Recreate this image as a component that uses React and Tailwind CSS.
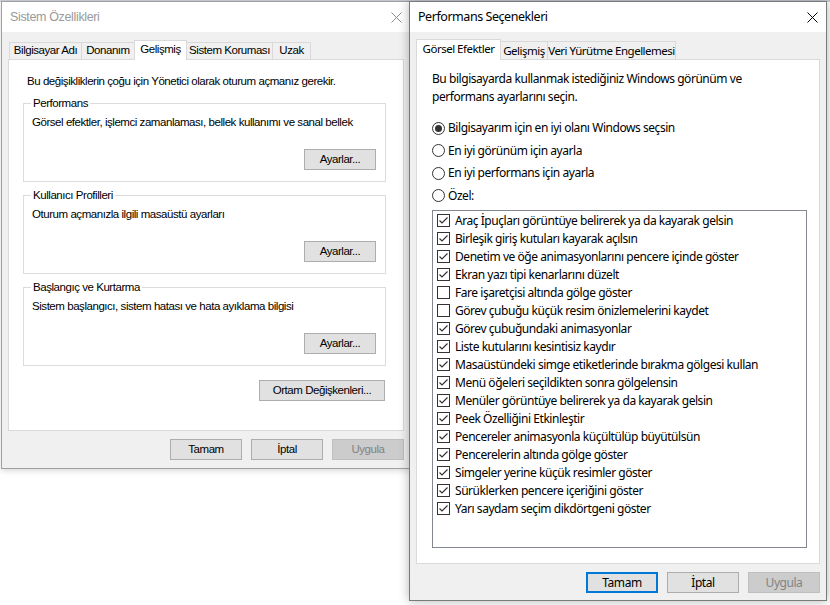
import React from 'react';

const W1_FONT = { fontFamily: '"Liberation Sans", Arial, sans-serif' };
const W2_FONT = { fontFamily: '"Noto Sans", "Open Sans", sans-serif' };

function CloseX({ color }) {
  return (
    <svg width="11" height="11" viewBox="0 0 11 11">
      <path d="M0.5 0.5 L10.5 10.5 M10.5 0.5 L0.5 10.5" stroke={color} strokeWidth="1" />
    </svg>
  );
}

function Btn({ children, w = 'w-[72px]', disabled, focused }) {
  let cls = 'border-[#adadad] bg-[#e1e1e1] text-black';
  if (disabled) cls = 'border-[#bfbfbf] bg-[#cccccc] text-[#838383]';
  if (focused) cls = 'border-2 border-[#0078d7] bg-[#e1e1e1] text-black';
  return (
    <div className={`h-[21px] ${w} flex items-center justify-center whitespace-nowrap border ${cls}`}>
      {children}
    </div>
  );
}

// group box with its caption sitting on the top border
function GroupBox({ title, text }) {
  return (
    <div className="relative border border-[#dcdcdc] h-[79px] pl-[8px] pr-[9px] pt-[11px] flex flex-col">
      <span className="absolute -top-[8px] left-[7px] bg-white px-[2px] leading-[14px]">{title}</span>
      <div className="leading-[14px]">{text}</div>
      <div className="mt-[20px] flex justify-end">
        <Btn>Ayarlar...</Btn>
      </div>
    </div>
  );
}

function SystemProps() {
  const tabs = [
    ['Bilgisayar Adı', 'w-[73px]'],
    ['Donanım', 'w-[54px]'],
    ['Gelişmiş', 'w-[53px]', true],
    ['Sistem Koruması', 'w-[87px]'],
    ['Uzak', 'w-[39px]'],
  ];
  return (
    <div
      className="absolute left-[1px] top-[1px] w-[410px] h-[468px] border border-[#a0a0a0] bg-[#f0f0f0] flex flex-col text-[11.5px] tracking-[-0.45px] shadow-[0_2px_6px_rgba(0,0,0,0.15)]"
      style={W1_FONT}
    >
      <div className="h-[30px] bg-white flex items-center justify-between pl-[8px] pr-[8px] shrink-0">
        <span className="text-[#9a9a9a] text-[12.5px] tracking-[-0.35px]">Sistem Özellikleri</span>
        <CloseX color="#8a8a8a" />
      </div>
      <div className="px-[6px] pt-[8px] flex flex-col">
        <div className="flex items-end h-[19px] pl-[1px]">
          {tabs.map(([label, w, sel]) => (
            <div
              key={label}
              className={`${w} flex items-center justify-center whitespace-nowrap border-[#d9d9d9] border-t border-l border-r -mr-px ${
                sel ? 'h-[20px] bg-white relative z-10 -mb-px pb-[2px]' : 'h-[17px] bg-[#f0f0f0]'
              }`}
            >
              {label}
            </div>
          ))}
        </div>
        <div className="h-[372px] border border-[#d9d9d9] bg-white flex flex-col pl-[14px] pr-[17px] pt-[13px]">
          <div className="pl-[4px] leading-[16px]">Bu değişikliklerin çoğu için Yönetici olarak oturum açmanız gerekir.</div>
          <div className="mt-[14px] flex flex-col gap-[13px]">
            <GroupBox title="Performans" text="Görsel efektler, işlemci zamanlaması, bellek kullanımı ve sanal bellek" />
            <GroupBox title="Kullanıcı Profilleri" text="Oturum açmanızla ilgili masaüstü ayarları" />
            <GroupBox title="Başlangıç ve Kurtarma" text="Sistem başlangıcı, sistem hatası ve hata ayıklama bilgisi" />
          </div>
          <div className="mt-[14px] flex justify-end pr-[1px]">
            <Btn w="w-[126px]">Ortam Değişkenleri...</Btn>
          </div>
        </div>
        <div className="mt-[8px] flex justify-end gap-[9px]">
          <Btn>Tamam</Btn>
          <Btn>İptal</Btn>
          <Btn disabled>Uygula</Btn>
        </div>
      </div>
    </div>
  );
}

function Radio({ checked, label }) {
  return (
    <div className="flex items-center gap-[3px] h-[16px]">
      <div className="w-[13px] h-[13px] rounded-full border border-[#333] bg-white flex items-center justify-center">
        {checked && <div className="w-[7px] h-[7px] rounded-full bg-[#333]" />}
      </div>
      <span>{label}</span>
    </div>
  );
}

function Check({ checked, label }) {
  return (
    <div className="flex items-center gap-[5px] h-[18px]">
      <div className="w-[13px] h-[13px] border border-[#333] bg-white flex items-center justify-center">
        {checked && (
          <svg width="11" height="11" viewBox="0 0 11 11">
            <path d="M1.5 5.5 L4 8 L9.5 2.5" fill="none" stroke="#333" strokeWidth="1.2" />
          </svg>
        )}
      </div>
      <span>{label}</span>
    </div>
  );
}

const items = [
  ['Araç İpuçları görüntüye belirerek ya da kayarak gelsin', true],
  ['Birleşik giriş kutuları kayarak açılsın', true],
  ['Denetim ve öğe animasyonlarını pencere içinde göster', true],
  ['Ekran yazı tipi kenarlarını düzelt', true],
  ['Fare işaretçisi altında gölge göster', false],
  ['Görev çubuğu küçük resim önizlemelerini kaydet', false],
  ['Görev çubuğundaki animasyonlar', true],
  ['Liste kutularını kesintisiz kaydır', true],
  ['Masaüstündeki simge etiketlerinde bırakma gölgesi kullan', true],
  ['Menü öğeleri seçildikten sonra gölgelensin', true],
  ['Menüler görüntüye belirerek ya da kayarak gelsin', true],
  ['Peek Özelliğini Etkinleştir', true],
  ['Pencereler animasyonla küçültülüp büyütülsün', true],
  ['Pencerelerin altında gölge göster', true],
  ['Simgeler yerine küçük resimler göster', true],
  ['Sürüklerken pencere içeriğini göster', true],
  ['Yarı saydam seçim dikdörtgeni göster', true],
];

function PerfOptions() {
  const tabs = [
    ['Görsel Efektler', 'w-[85px]', true],
    ['Gelişmiş', 'w-[48px]'],
    ['Veri Yürütme Engellemesi', 'w-[129px]'],
  ];
  return (
    <div
      className="absolute left-[409px] top-[1px] w-[418px] h-[600px] border border-[#7a7a7a] bg-[#f0f0f0] flex flex-col text-[12px] tracking-[-0.45px] text-black shadow-[0_0_10px_rgba(0,0,0,0.3)] z-20"
      style={W2_FONT}
    >
      <div className="h-[30px] bg-white flex items-center justify-between pl-[8px] pr-[8px] shrink-0">
        <span className="text-[12.5px]">Performans Seçenekleri</span>
        <CloseX color="#000" />
      </div>
      <div className="px-[6px] pt-[7px] flex flex-col">
        <div className="flex items-end h-[20px] text-[11.5px] tracking-[-0.5px]">
          {tabs.map(([label, w, sel]) => (
            <div
              key={label}
              className={`${w} shrink-0 flex items-center justify-center whitespace-nowrap border-[#d9d9d9] border-t border-l border-r -mr-px ${
                sel ? 'h-[21px] bg-white relative z-10 -mb-px pb-[2px]' : 'h-[18px] bg-[#f0f0f0]'
              }`}
            >
              {label}
            </div>
          ))}
        </div>
        <div className="h-[505px] border border-[#d9d9d9] bg-white flex flex-col pl-[15px] pr-[12px] pt-[10px]">
          <div className="leading-[18px]">
            Bu bilgisayarda kullanmak istediğiniz Windows görünüm ve
            <br />
            performans ayarlarını seçin.
          </div>
          <div className="mt-[14px] flex flex-col gap-[6.5px]">
            <Radio checked label="Bilgisayarım için en iyi olanı Windows seçsin" />
            <Radio label="En iyi görünüm için ayarla" />
            <Radio label="En iyi performans için ayarla" />
            <Radio label="Özel:" />
          </div>
          <div className="mt-[6px] h-[338px] border border-[#828790] bg-white pl-[4px] pt-[1px]">
            {items.map(([label, c]) => (
              <Check key={label} checked={c} label={label} />
            ))}
          </div>
        </div>
        <div className="mt-[8px] flex justify-end gap-[9px]">
          <Btn focused>Tamam</Btn>
          <Btn>İptal</Btn>
          <Btn disabled>Uygula</Btn>
        </div>
      </div>
    </div>
  );
}

export default function App() {
  return (
    <div className="relative w-[830px] h-[605px] overflow-hidden bg-white">
      <div className="absolute left-0 top-0 w-[830px] h-[2px] bg-[#c8cdd6]" />
      <SystemProps />
      <PerfOptions />
    </div>
  );
}
